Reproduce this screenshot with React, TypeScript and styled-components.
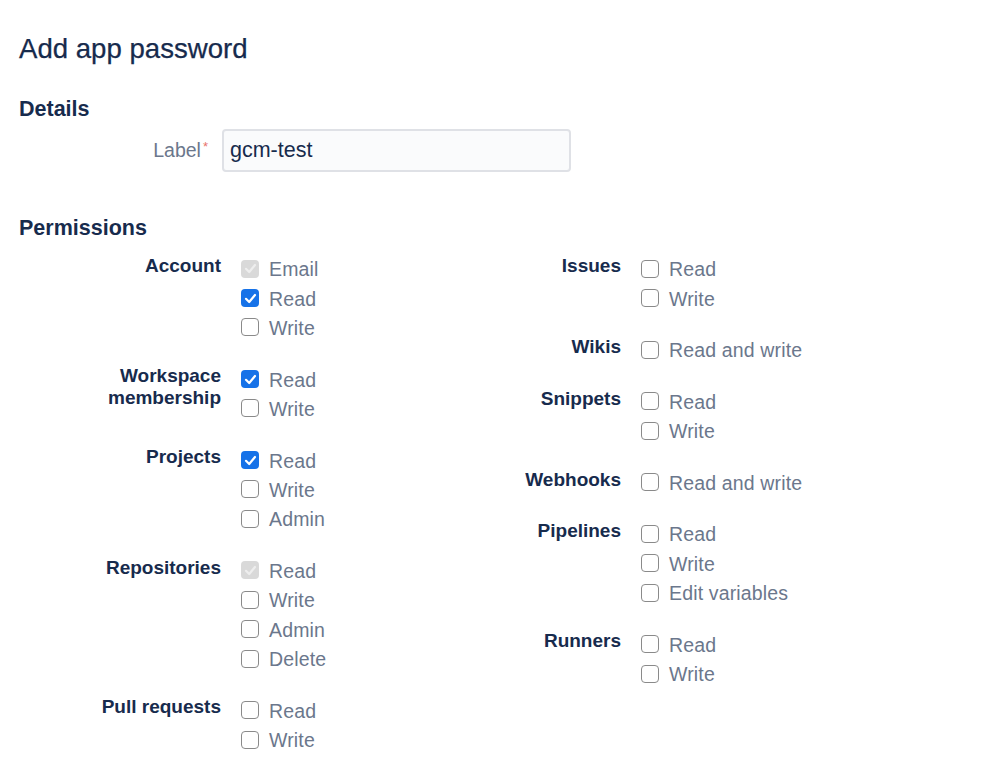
import React from "react";
import styled, { createGlobalStyle } from "styled-components";

const Global = createGlobalStyle`
  html, body { margin: 0; padding: 0; background: #ffffff; }
  body { font-family: "Liberation Sans", Arial, sans-serif; -webkit-font-smoothing: antialiased; }
`;

const Page = styled.div`
  padding: 30px 0 0 19px;
  color: #172b4d;
`;

const Title = styled.h1`
  margin: 0;
  font-size: 27.6px;
  font-weight: 400;
  line-height: 38px;
  color: #172b4d;
  -webkit-text-stroke: 0.25px #172b4d;
`;

const SectionTitle = styled.h2<{ $top: number }>`
  margin: ${(p) => p.$top}px 0 0 0;
  font-size: 21.5px;
  font-weight: 700;
  line-height: 28px;
  color: #172b4d;
`;

const FieldRow = styled.div`
  display: flex;
  align-items: center;
  gap: 14px;
  margin-top: 6px;
`;

const FieldLabel = styled.label`
  width: 189px;
  text-align: right;
  font-size: 19.5px;
  color: #6b778c;
`;

const Required = styled.span`
  color: #e8736b;
  font-size: 13px;
  vertical-align: top;
  margin-left: 2px;
`;

const TextInput = styled.input`
  box-sizing: border-box;
  width: 349px;
  height: 43px;
  border: 2px solid #dfe1e6;
  border-radius: 4px;
  background: #fafbfc;
  padding: 0 6px;
  font-family: "Liberation Sans", Arial, sans-serif;
  font-size: 21.5px;
  color: #172b4d;
  outline: none;
`;

const Columns = styled.div`
  display: grid;
  grid-template-columns: 400px auto;
  margin-top: 13px;
`;

const Column = styled.div`
  display: flex;
  flex-direction: column;
  gap: 22.2px;
`;

const Group = styled.div`
  display: grid;
  grid-template-columns: 202px auto;
  column-gap: 20px;
  align-items: start;
`;

const GroupLabel = styled.div`
  text-align: right;
  font-size: 19px;
  font-weight: 700;
  line-height: 22px;
  color: #172b4d;
`;

const Options = styled.div`
  display: flex;
  flex-direction: column;
`;

const Option = styled.label`
  display: flex;
  align-items: center;
  gap: 10px;
  height: 29.4px;
  font-size: 19.5px;
  letter-spacing: 0.15px;
  color: #6b778c;
`;

const Box = styled.span<{ $state: "off" | "on" | "disabled" }>`
  box-sizing: border-box;
  width: 18px;
  height: 18px;
  border-radius: 4px;
  flex: none;
  display: flex;
  align-items: center;
  justify-content: center;
  background: ${(p) =>
    p.$state === "on" ? "#1672e8" : p.$state === "disabled" ? "#d9d9d9" : "#ffffff"};
  border: ${(p) => (p.$state === "off" ? "1.5px solid #8a8a8a" : "none")};
  margin-top: -2px;
`;

const Check = ({ color }: { color: string }) => (
  <svg width="13" height="13" viewBox="0 0 13 13">
    <path d="M2 6.8 L5.2 10 L11 3" fill="none" stroke={color} strokeWidth="2.2" strokeLinecap="round" strokeLinejoin="round" />
  </svg>
);

type Opt = { text: string; state: "off" | "on" | "disabled" };
type Grp = { label: React.ReactNode; options: Opt[] };

const o = (text: string, state: Opt["state"] = "off"): Opt => ({ text, state });

const left: Grp[] = [
  { label: "Account", options: [o("Email", "disabled"), o("Read", "on"), o("Write")] },
  { label: <>Workspace<br />membership</>, options: [o("Read", "on"), o("Write")] },
  { label: "Projects", options: [o("Read", "on"), o("Write"), o("Admin")] },
  { label: "Repositories", options: [o("Read", "disabled"), o("Write"), o("Admin"), o("Delete")] },
  { label: "Pull requests", options: [o("Read"), o("Write")] },
];

const right: Grp[] = [
  { label: "Issues", options: [o("Read"), o("Write")] },
  { label: "Wikis", options: [o("Read and write")] },
  { label: "Snippets", options: [o("Read"), o("Write")] },
  { label: "Webhooks", options: [o("Read and write")] },
  { label: "Pipelines", options: [o("Read"), o("Write"), o("Edit variables")] },
  { label: "Runners", options: [o("Read"), o("Write")] },
];

const GroupView = ({ g }: { g: Grp }) => (
  <Group>
    <GroupLabel>{g.label}</GroupLabel>
    <Options>
      {g.options.map((opt, i) => (
        <Option key={i}>
          <Box $state={opt.state}>
            {opt.state === "on" && <Check color="#ffffff" />}
            {opt.state === "disabled" && <Check color="#eeeeee" />}
          </Box>
          {opt.text}
        </Option>
      ))}
    </Options>
  </Group>
);

export default function App() {
  return (
    <Page>
      <Global />
      <Title>Add app password</Title>
      <SectionTitle $top={27}>Details</SectionTitle>
      <FieldRow>
        <FieldLabel>
          Label<Required>*</Required>
        </FieldLabel>
        <TextInput defaultValue="gcm-test" />
      </FieldRow>
      <SectionTitle $top={42}>Permissions</SectionTitle>
      <Columns>
        <Column>
          {left.map((g, i) => (
            <GroupView key={i} g={g} />
          ))}
        </Column>
        <Column>
          {right.map((g, i) => (
            <GroupView key={i} g={g} />
          ))}
        </Column>
      </Columns>
    </Page>
  );
}
